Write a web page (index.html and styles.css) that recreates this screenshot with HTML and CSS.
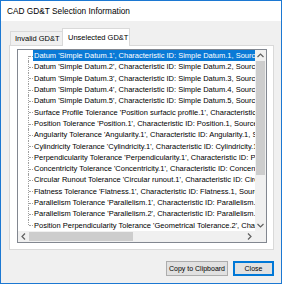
FILE: index.html
```html
<!DOCTYPE html>
<html>
<head>
<meta charset="utf-8">
<title>CAD GD&amp;T Selection Information</title>
<link rel="stylesheet" href="styles.css">
</head>
<body>
<div class="window">
  <div class="titlebar">CAD GD&amp;T Selection Information</div>
  <div class="client">
    <div class="tabs">
      <div class="tab">Invalid GD&amp;T</div>
      <div class="tab active">Unselected GD&amp;T</div>
    </div>
    <div class="panel">
      <div class="listbox">
        <div class="listmain">
          <ul class="tree">
            <li class="item selected"><span class="label">Datum 'Simple Datum.1', Characteristic ID: Simple Datum.1, Source: Part1</span></li>
            <li class="item"><span class="label">Datum 'Simple Datum.2', Characteristic ID: Simple Datum.2, Source: Part1</span></li>
            <li class="item"><span class="label">Datum 'Simple Datum.3', Characteristic ID: Simple Datum.3, Source: Part1</span></li>
            <li class="item"><span class="label">Datum 'Simple Datum.4', Characteristic ID: Simple Datum.4, Source: Part1</span></li>
            <li class="item"><span class="label">Datum 'Simple Datum.5', Characteristic ID: Simple Datum.5, Source: Part1</span></li>
            <li class="item"><span class="label">Surface Profile Tolerance 'Position surfacic profile.1', Characteristic ID: Position surfacic profile.1, Source: Part1</span></li>
            <li class="item"><span class="label">Position Tolerance 'Position.1', Characteristic ID: Position.1, Source: Part1</span></li>
            <li class="item"><span class="label">Angularity Tolerance 'Angularity.1', Characteristic ID: Angularity.1, Source: Part1</span></li>
            <li class="item"><span class="label">Cylindricity Tolerance 'Cylindricity.1', Characteristic ID: Cylindricity.1, Source: Part1</span></li>
            <li class="item"><span class="label">Perpendicularity Tolerance 'Perpendicularity.1', Characteristic ID: Perpendicularity.1, Source: Part1</span></li>
            <li class="item"><span class="label">Concentricity Tolerance 'Concentricity.1', Characteristic ID: Concentricity.1, Source: Part1</span></li>
            <li class="item"><span class="label">Circular Runout Tolerance 'Circular runout.1', Characteristic ID: Circular runout.1, Source: Part1</span></li>
            <li class="item"><span class="label">Flatness Tolerance 'Flatness.1', Characteristic ID: Flatness.1, Source: Part1</span></li>
            <li class="item"><span class="label">Parallelism Tolerance 'Parallelism.1', Characteristic ID: Parallelism.1, Source: Part1</span></li>
            <li class="item"><span class="label">Parallelism Tolerance 'Parallelism.2', Characteristic ID: Parallelism.2, Source: Part1</span></li>
            <li class="item"><span class="label">Position Perpendicularity Tolerance 'Geometrical Tolerance.2', Characteristic ID: Geometrical Tolerance.2, Source: Part1</span></li>
          </ul>
          <div class="vscroll">
            <div class="sb-btn"><svg width="7" height="5" viewBox="0 0 7 5"><polyline points="0.5,4 3.5,1 6.5,4" fill="none" stroke="#606060" stroke-width="1.2"/></svg></div>
            <div class="vthumb"></div>
            <div class="vtrack"></div>
            <div class="sb-btn"><svg width="7" height="5" viewBox="0 0 7 5"><polyline points="0.5,1 3.5,4 6.5,1" fill="none" stroke="#606060" stroke-width="1.2"/></svg></div>
          </div>
        </div>
        <div class="hscroll">
          <div class="sb-btn"><svg width="5" height="7" viewBox="0 0 5 7"><polyline points="4,0.5 1,3.5 4,6.5" fill="none" stroke="#606060" stroke-width="1.2"/></svg></div>
          <div class="hthumb"></div>
          <div class="htrack"></div>
          <div class="sb-btn"><svg width="5" height="7" viewBox="0 0 5 7"><polyline points="1,0.5 4,3.5 1,6.5" fill="none" stroke="#606060" stroke-width="1.2"/></svg></div>
          <div class="corner"></div>
        </div>
      </div>
    </div>
    <div class="buttons">
      <button class="btn copy">Copy to Clipboard</button>
      <button class="btn close">Close</button>
    </div>
  </div>
</div>
</body>
</html>
```

FILE: styles.css
```css
* { box-sizing: border-box; }
html, body { margin: 0; padding: 0; }
body {
  width: 282px;
  height: 284px;
  overflow: hidden;
  background: #ffffff;
  font-family: "Liberation Sans", Arial, sans-serif;
  font-size: 7.5px;
  color: #000;
}
.window {
  width: 282px;
  height: 284px;
  border: 1px solid #1c78d2;
  display: flex;
  flex-direction: column;
  background: #f0f0f0;
}
.titlebar {
  height: 20px;
  flex: none;
  background: #ffffff;
  font-size: 8.3px;
  padding-left: 6px;
  display: flex;
  align-items: center;
}
.client {
  flex: 1;
  display: flex;
  flex-direction: column;
  padding: 7px 7px 0 8px;
}
.tabs {
  height: 17px;
  flex: none;
  display: flex;
  align-items: flex-end;
}
.tab {
  height: 14px;
  width: 53px;
  margin-left: 1px;
  padding-left: 4px;
  border: 1px solid #d9d9d9;
  border-bottom: none;
  background: #f0f0f0;
  display: flex;
  align-items: center;
  white-space: nowrap;
}
.tab.active {
  height: 18px;
  width: 68px;
  margin-left: -1px;
  margin-bottom: -1px;
  padding-left: 5px;
  background: #ffffff;
  position: relative;
  z-index: 1;
  padding-bottom: 1px;
}
.panel {
  height: 205px;
  flex: none;
  background: #ffffff;
  border: 1px solid #d9d9d9;
  padding: 3px 6px 6px 7px;
}
.listbox {
  height: 194px;
  border: 1px solid #828790;
  display: flex;
  flex-direction: column;
  background: #fff;
}
.listmain {
  flex: 1;
  display: flex;
  min-height: 0;
}
.tree {
  list-style: none;
  margin: 0;
  padding: 0;
  flex: 1;
  min-width: 0;
  overflow: hidden;
}
.item {
  height: 11.3125px;
  line-height: 11.3125px;
  position: relative;
  padding-left: 15px;
  white-space: nowrap;
}
.item::before {
  content: "";
  position: absolute;
  left: 10px;
  top: 0;
  bottom: 0;
  border-left: 1px dotted #a0a0a0;
}
.item:first-child::before { top: 50%; }
.item:last-child::before { bottom: 50%; }
.item::after {
  content: "";
  position: absolute;
  left: 11px;
  top: 50%;
  width: 4px;
  border-top: 1px dotted #a0a0a0;
}
.label {
  display: inline-block;
  height: 100%;
  padding: 0 1px;
}
.selected .label {
  background: #0a7ad6;
  color: #ffffff;
}
.vscroll {
  width: 11px;
  flex: none;
  display: flex;
  flex-direction: column;
  background: #f0f0f0;
}
.sb-btn {
  width: 11px;
  height: 11px;
  flex: none;
  display: flex;
  align-items: center;
  justify-content: center;
}
.sb-btn svg { display: block; }
.vthumb {
  height: 114px;
  flex: none;
  margin: 0 1px;
  background: #cdcdcd;
}
.vtrack { flex: 1; }
.hscroll {
  height: 11px;
  flex: none;
  display: flex;
  background: #f0f0f0;
}
.hthumb {
  width: 104px;
  flex: none;
  margin: 1px 0;
  background: #cdcdcd;
}
.htrack { flex: 1; }
.corner {
  width: 11px;
  flex: none;
  background: #f0f0f0;
}
.buttons {
  display: flex;
  justify-content: flex-end;
  gap: 5px;
  margin-top: 11px;
}
.btn {
  height: 15px;
  margin: 0;
  padding: 0;
  font-family: "Liberation Sans", Arial, sans-serif;
  font-size: 7px;
  white-space: nowrap;
  color: #000;
  background: #e1e1e1;
  border: 1px solid #adadad;
  border-radius: 0;
}
.btn.copy { width: 62px; }
.btn.close {
  width: 41px;
  border-color: #0078d7;
  box-shadow: inset 0 0 0 1px #0078d7;
}
```
